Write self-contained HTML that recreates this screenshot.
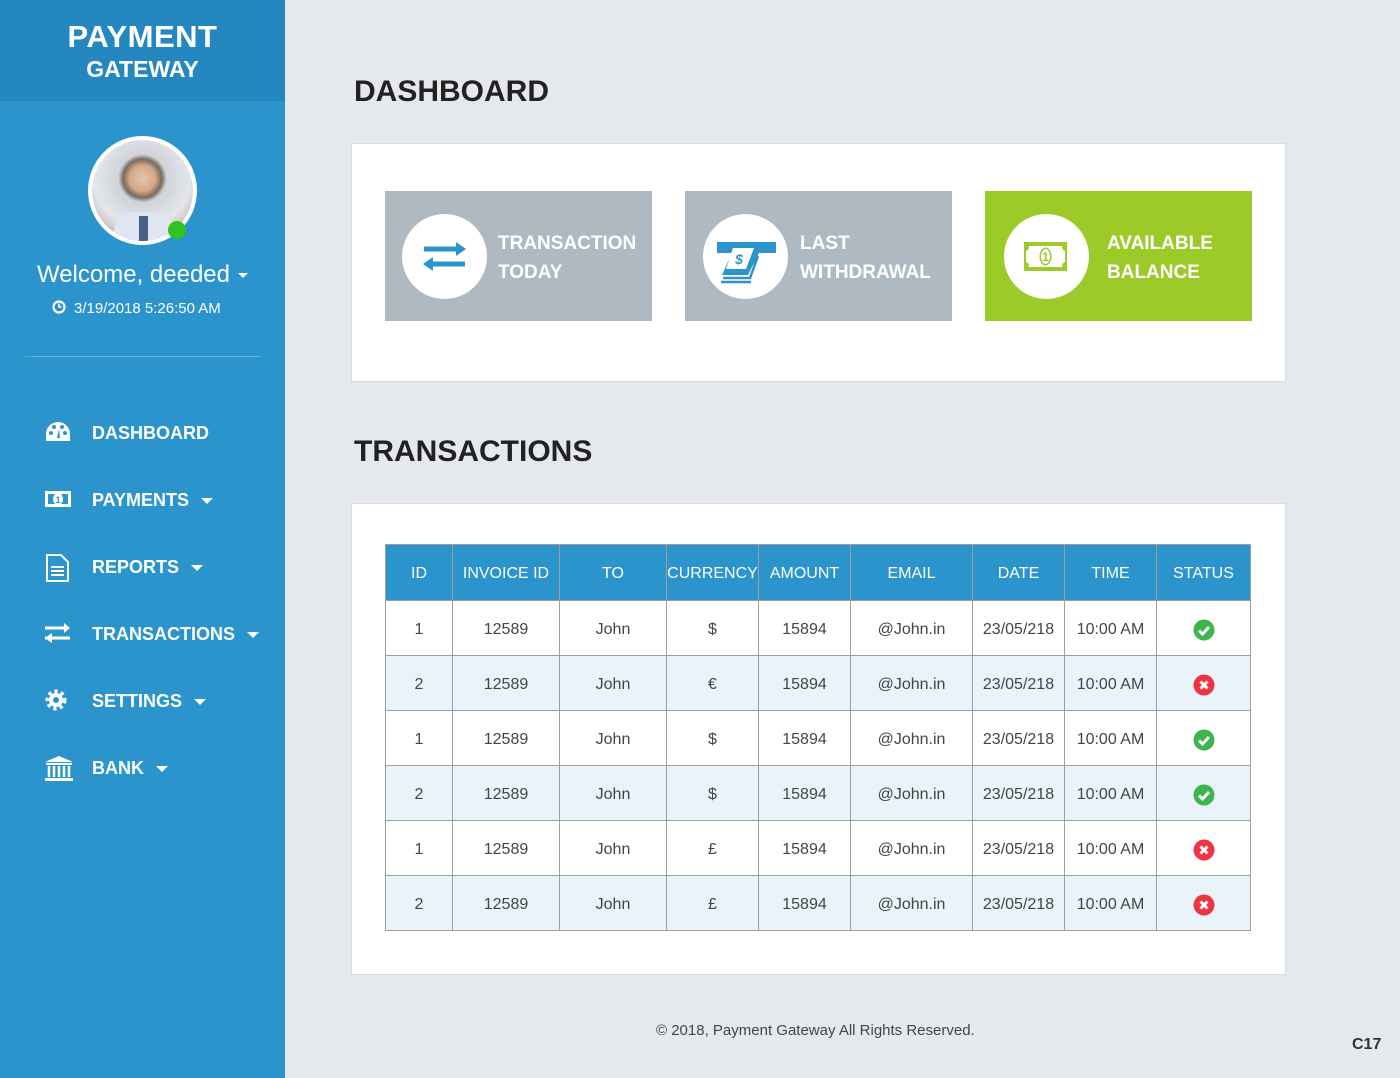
<!DOCTYPE html>
<html><head><meta charset="utf-8"><style>
*{margin:0;padding:0;box-sizing:border-box}
body{width:1400px;height:1078px;background:#e5e9ee;font-family:"Liberation Sans",sans-serif;position:relative;overflow:hidden}
.abs{position:absolute}
#side{left:0;top:0;width:285px;height:1078px;background:#2b94cd}
#logo{left:0;top:0;width:285px;height:101px;background:#2587bf;color:#fff;text-align:center;font-weight:bold}
.nav{position:absolute;left:0;width:285px;height:30px;color:#fff;font-weight:bold;font-size:18px}
.nav svg{position:absolute;left:44px;top:2px}
.nav span{position:absolute;left:92px;top:5px}
.caret{display:inline-block;width:0;height:0;border-left:6px solid transparent;border-right:6px solid transparent;border-top:6px solid #fff;margin-left:12px;vertical-align:middle}
h1{position:absolute;font-size:30px;color:#222;font-weight:bold}
.card{position:absolute;background:#fff;border:1px solid #d9dde2}
.tile{position:absolute;top:191px;width:267px;height:130px;background:#aeb9c1;color:#fff;font-weight:bold;font-size:19px;line-height:29px}
.tile .c{position:absolute;left:17px;top:23px;width:85px;height:85px;border-radius:50%;background:#fff}
.tile .t{position:absolute;left:113px;top:38px}
table{position:absolute;left:385px;top:544px;border-collapse:collapse;font-size:16px;color:#444}
td,th{border:1px solid #9e9e9e;text-align:center;height:55px;padding:3px 0 0}
th{background:#2b94cd;color:#fff;font-weight:normal;font-size:16px;height:56px}
tr.a td{background:#e8f4fa}
td svg{vertical-align:middle}
</style></head><body>
<svg width="0" height="0" style="position:absolute"><defs>
<g id="ok"><circle cx="11" cy="11" r="10.5" fill="#3cb54a"/><path d="M6 11.5l3.5 3.5 6.5-7" stroke="#fff" stroke-width="3" fill="none"/></g>
<g id="no"><circle cx="11" cy="11" r="10.5" fill="#ef3340"/><path d="M7.5 7.5l7 7M14.5 7.5l-7 7" stroke="#fff" stroke-width="3"/></g>
</defs></svg>
<div id="side" class="abs"></div>
<div id="logo" class="abs"><div style="font-size:31px;padding-top:19px;letter-spacing:0.5px">PAYMENT</div><div style="font-size:23px;margin-top:1px">GATEWAY</div></div>
<div class="abs" style="left:88px;top:136px;width:109px;height:109px;border-radius:50%;background:#fff;padding:4px">
<div style="width:101px;height:101px;border-radius:50%;background:radial-gradient(circle at 50% 38%,#e8c4a8 0,#d4a888 16%,#7a6a5e 24%,#cfd4d8 30%,#e4e6ea 60%,#a08470 100%);overflow:hidden;position:relative">
<div style="position:absolute;left:22px;top:72px;width:60px;height:40px;background:#dfe6f2;border-radius:20px 20px 0 0"></div>
<div style="position:absolute;left:47px;top:76px;width:9px;height:30px;background:#4a5e8a"></div></div></div>
<div class="abs" style="left:168px;top:221px;width:18px;height:18px;border-radius:50%;background:#2fc41e"></div>
<div class="abs" style="left:0;top:261px;width:285px;text-align:center;color:#fff;font-size:24px">Welcome, deeded<span class="caret" style="border-width:5px 5px 0;margin-left:8px"></span></div>
<div class="abs" style="left:52px;top:300px;color:#fff;font-size:15px"><svg width="14" height="14" viewBox="0 0 14 14" style="vertical-align:-1px;margin-right:8px"><circle cx="7" cy="7" r="5.5" fill="none" stroke="#fff" stroke-width="2.2"/><path d="M7 3.5V7h2.5" stroke="#fff" stroke-width="1.6" fill="none"/></svg>3/19/2018 5:26:50 AM</div>
<div class="abs" style="left:25px;top:356px;width:236px;height:1px;background:#5cb0dc"></div>

<div class="nav" style="top:418px"><svg width="28" height="24" viewBox="0 0 28 24"><path d="M14 2A12 12 0 0 0 2 14v7h24v-7A12 12 0 0 0 14 2z" fill="#fff"/><circle cx="7" cy="13" r="2" fill="#2b94cd"/><circle cx="10" cy="7" r="2" fill="#2b94cd"/><circle cx="18" cy="7" r="2" fill="#2b94cd"/><circle cx="21" cy="13" r="2" fill="#2b94cd"/><path d="M13 18l2-9 1 9z" fill="#2b94cd"/></svg><span>DASHBOARD</span></div>
<div class="nav" style="top:485px"><svg width="28" height="24" viewBox="0 0 28 24"><rect x="1" y="4" width="26" height="16" fill="#fff"/><rect x="4" y="7" width="20" height="10" fill="#2b94cd"/><ellipse cx="14" cy="12" rx="5" ry="6" fill="#fff"/><text x="14" y="16" font-size="9" text-anchor="middle" fill="#2b94cd" font-weight="bold">1</text></svg><span>PAYMENTS<i class="caret"></i></span></div>
<div class="nav" style="top:552px"><svg width="28" height="28" viewBox="0 0 28 28"><path d="M3 1h14l7 7v19H3z" fill="none" stroke="#fff" stroke-width="2"/><path d="M7 13h13M7 17h13M7 21h13" stroke="#fff" stroke-width="2"/></svg><span>REPORTS<i class="caret"></i></span></div>
<div class="nav" style="top:619px"><svg width="28" height="24" viewBox="0 0 28 24"><path d="M1 7h21M1 17h25" stroke="#fff" stroke-width="3"/><path d="M20 2l6 5-6 5zM8 12l-7 5 7 5z" fill="#fff"/></svg><span>TRANSACTIONS<i class="caret"></i></span></div>
<div class="nav" style="top:686px"><svg width="26" height="26" viewBox="0 0 26 26"><circle cx="12" cy="12" r="8" fill="none" stroke="#fff" stroke-width="5" stroke-dasharray="3 3"/><circle cx="12" cy="12" r="7" fill="#fff"/><circle cx="12" cy="12" r="3" fill="#2b94cd"/></svg><span>SETTINGS<i class="caret"></i></span></div>
<div class="nav" style="top:753px"><svg width="30" height="28" viewBox="0 0 30 28"><path d="M15 1L1 7h28z" fill="#fff"/><rect x="2" y="8" width="26" height="2" fill="#fff"/><path d="M5 11v11M10 11v11M15 11v11M20 11v11M25 11v11" stroke="#fff" stroke-width="2.5"/><rect x="1" y="23" width="28" height="3" fill="#fff"/></svg><span>BANK<i class="caret"></i></span></div>

<h1 style="left:354px;top:75px">DASHBOARD</h1>
<div class="card" style="left:351px;top:143px;width:935px;height:239px"></div>
<div class="tile" style="left:385px"><div class="c"><svg width="85" height="85" viewBox="0 0 85 85"><path d="M22 35h34M29 50h34" stroke="#2b94cd" stroke-width="5"/><path d="M54 28l10 7-10 7zM31 43l-10 7 10 7z" fill="#2b94cd"/></svg></div><div class="t">TRANSACTION<br>TODAY</div></div>
<div class="tile" style="left:685px"><div class="c" style="left:18px"><svg width="85" height="85" viewBox="0 0 85 85"><path d="M14 28h59v11H56l-11 22H19l10-22H14z" fill="#2b94cd"/><path d="M30 34l-7 21h20l8-21" fill="#fff"/><text x="36" y="50" font-size="14" font-weight="bold" fill="#2b94cd" text-anchor="middle" font-style="italic">$</text><path d="M20 64h27l8-22M18 68h30" stroke="#2b94cd" stroke-width="2.5" fill="none"/></svg></div><div class="t" style="left:115px">LAST<br>WITHDRAWAL</div></div>
<div class="tile" style="left:985px;background:#9ccb29"><div class="c" style="left:19px"><svg width="85" height="85" viewBox="0 0 85 85"><rect x="20" y="28" width="43" height="29" fill="#9ccb29"/><path d="M25 32h33q0 4 3 5v11q-3 1-3 5H25q0-4-3-5V37q3-1 3-5z" fill="#fff"/><ellipse cx="41.5" cy="42.5" rx="6" ry="9" fill="#9ccb29"/><ellipse cx="41.5" cy="42.5" rx="4.5" ry="7.5" fill="#fff"/><text x="41.5" y="47" font-size="12" font-weight="bold" fill="#9ccb29" text-anchor="middle">1</text></svg></div><div class="t" style="left:122px">AVAILABLE<br>BALANCE</div></div>

<h1 style="left:354px;top:435px">TRANSACTIONS</h1>
<div class="card" style="left:351px;top:503px;width:935px;height:472px"></div>
<table>
<tr><th style="width:67px">ID</th><th style="width:107px">INVOICE ID</th><th style="width:107px">TO</th><th style="width:92px">CURRENCY</th><th style="width:92px">AMOUNT</th><th style="width:122px">EMAIL</th><th style="width:92px">DATE</th><th style="width:92px">TIME</th><th style="width:94px">STATUS</th></tr>
<tr><td>1</td><td>12589</td><td>John</td><td>$</td><td>15894</td><td>@John.in</td><td>23/05/218</td><td>10:00 AM</td><td><svg width="22" height="22"><use href="#ok"/></svg></td></tr>
<tr class="a"><td>2</td><td>12589</td><td>John</td><td>€</td><td>15894</td><td>@John.in</td><td>23/05/218</td><td>10:00 AM</td><td><svg width="22" height="22"><use href="#no"/></svg></td></tr>
<tr><td>1</td><td>12589</td><td>John</td><td>$</td><td>15894</td><td>@John.in</td><td>23/05/218</td><td>10:00 AM</td><td><svg width="22" height="22"><use href="#ok"/></svg></td></tr>
<tr class="a"><td>2</td><td>12589</td><td>John</td><td>$</td><td>15894</td><td>@John.in</td><td>23/05/218</td><td>10:00 AM</td><td><svg width="22" height="22"><use href="#ok"/></svg></td></tr>
<tr><td>1</td><td>12589</td><td>John</td><td>£</td><td>15894</td><td>@John.in</td><td>23/05/218</td><td>10:00 AM</td><td><svg width="22" height="22"><use href="#no"/></svg></td></tr>
<tr class="a"><td>2</td><td>12589</td><td>John</td><td>£</td><td>15894</td><td>@John.in</td><td>23/05/218</td><td>10:00 AM</td><td><svg width="22" height="22"><use href="#no"/></svg></td></tr>
</table>
<div class="abs" style="left:656px;top:1022px;font-size:15px;color:#444">© 2018, Payment Gateway All Rights Reserved.</div>
<div class="abs" style="left:1352px;top:1036px;font-size:16px;color:#333;font-weight:bold">C17</div>
</body></html>
